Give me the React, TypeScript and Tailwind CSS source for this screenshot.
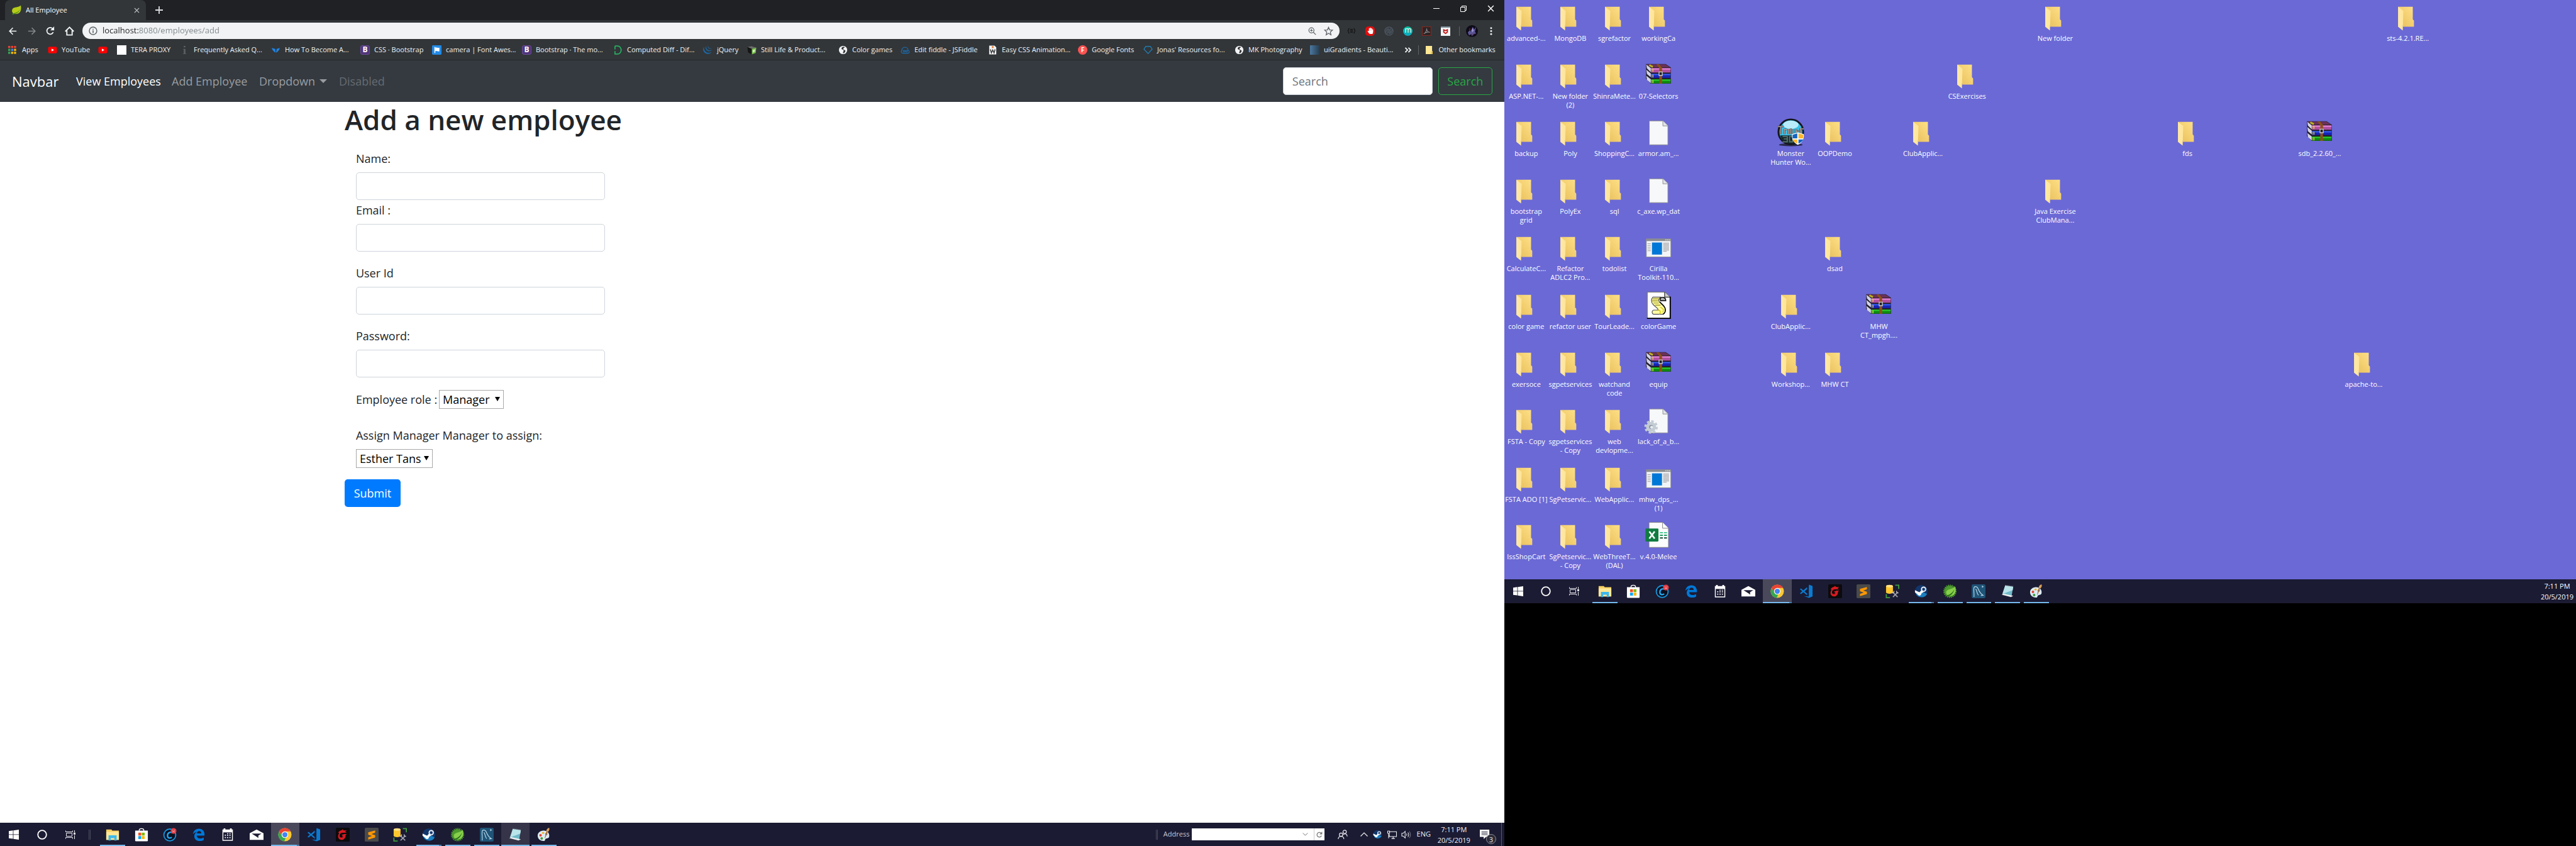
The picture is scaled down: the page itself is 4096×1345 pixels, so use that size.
import React from "react";
import { SiJquery } from "react-icons/si";
import { FaHandPaper } from "react-icons/fa";

type IconProps = { className?: string };

/* ---------- small browser icons ---------- */

const Leaf = ({ className }: IconProps) => (
  <svg viewBox="0 0 16 16" className={className}>
    <path d="M15 .5c.8 4 .8 8.800-2 11.500-2.400 2.300-6 2.600-9.500 1.600C.8 11.500.3 8.500 2 6c2.300-3.400 9.500-1.500 13-5.500z" fill="#b5cc18" />
    <path d="M1 14.800c1.500.8 3.500.3 5-1 3.500-.5 7-3 8.500-8-2 4.500-6 6.500-12 7.500z" fill="#4c8c1a" />
  </svg>
);

const CloseX = ({ className }: IconProps) => (
  <svg viewBox="0 0 10 10" className={className} stroke="currentColor" strokeWidth="1.300">
    <path d="M1 1l8 8M9 1L1 9" />
  </svg>
);

const Arrow = ({ className }: IconProps) => (
  <svg viewBox="0 0 16 16" className={className} fill="none" stroke="currentColor" strokeWidth="2">
    <path d="M15 8H2M8 1.500L1.500 8 8 14.500" />
  </svg>
);

const Reload = ({ className }: IconProps) => (
  <svg viewBox="0 0 16 16" className={className}>
    <path d="M13.300 10.500A6 6 0 1 1 12 3.800" fill="none" stroke="currentColor" strokeWidth="2" />
    <path d="M15 0v7H8z" fill="currentColor" />
  </svg>
);

const Home = ({ className }: IconProps) => (
  <svg viewBox="0 0 16 16" className={className} fill="none" stroke="currentColor" strokeWidth="2">
    <path d="M.8 8.500L8 1.500l7.200 7M3.500 7v7.500h9V7" />
  </svg>
);

const Info = ({ className }: IconProps) => (
  <svg viewBox="0 0 16 16" className={className}>
    <circle cx="8" cy="8" r="6.800" fill="none" stroke="#5f6368" strokeWidth="1.700" />
    <path d="M7.100 7h1.800v5H7.100zM7.100 4.200h1.800v1.700H7.100z" fill="#5f6368" />
  </svg>
);

const ZoomIn = ({ className }: IconProps) => (
  <svg viewBox="0 0 16 16" className={className} fill="none" stroke="#5f6368" strokeWidth="1.500">
    <circle cx="6.500" cy="6.500" r="5" />
    <path d="M10.200 10.200L15 15M4 6.500h5M6.500 4v5" />
  </svg>
);

const Star = ({ className }: IconProps) => (
  <svg viewBox="0 0 16 16" className={className} fill="none" stroke="#5f6368" strokeWidth="1.400">
    <path d="M8 1.500l1.900 4.400 4.700.4-3.600 3.200 1.100 4.700L8 11.700l-4.100 2.500L5 9.500 1.400 6.300l4.700-.4z" />
  </svg>
);

const Swirl = ({ className }: IconProps) => (
  <svg viewBox="0 0 16 16" className={className} fill="none" stroke="#4a525c" strokeWidth="1.600">
    <circle cx="8" cy="8" r="7" />
    <path d="M3 11c-1-4 2-7 5-7.500M13 5c1 4-2 7-5 7.500M5 9c0-3 3-4 5-3M11 7c0 3-3 4-5 3M4 13l8-10" />
  </svg>
);

const Pdf = ({ className }: IconProps) => (
  <svg viewBox="0 0 16 16" className={className}>
    <rect x=".6" y=".6" width="14.800" height="14.800" fill="#2c2426" stroke="#7e2a22" strokeWidth="1.200" />
    <path d="M3 12.500c3-1.500 5-5 5-9 .2 4 2 6.500 5.500 6.500C10 9 6 10 3 12.500z" fill="none" stroke="#8d8d90" strokeWidth="1.100" />
  </svg>
);

const Shield = ({ className }: IconProps) => (
  <svg viewBox="0 0 16 16" className={className}>
    <rect width="16" height="16" fill="#f4f4f4" />
    <rect width="16" height="2.200" fill="#7d9099" />
    <path d="M4 4.200l4 2 4-2v6l-4 2.800-4-2.800z" fill="#c01818" />
    <path d="M6 7.300l2 1 2-1v2l-2 1.400-2-1.400z" fill="#f4f4f4" />
  </svg>
);

const Avatar = ({ className }: IconProps) => (
  <svg viewBox="0 0 20 20" className={className}>
    <circle cx="10" cy="10" r="10" fill="#0e0b18" />
    <path d="M3 12l4-4 1 3 3-8 2 5 4-5-2 8 2 3-5 1-2 4-1-4-4 2z" fill="#5b5596" />
    <path d="M9 9l3-5 1 5-2 3z" fill="#9a93cf" />
    <path d="M5 8l1-3 2 2zM11 14l3 1-2 2z" fill="#7c2330" />
  </svg>
);

const Dots = ({ className }: IconProps) => (
  <svg viewBox="0 0 4 14" className={className} fill="#f1f1f1">
    <circle cx="2" cy="2" r="1.600" />
    <circle cx="2" cy="7" r="1.600" />
    <circle cx="2" cy="12" r="1.600" />
  </svg>
);

/* ---------- bookmark icons ---------- */

const AppsGrid = () => (
  <svg viewBox="0 0 14 14" className="size-[13px]">
    {["#ea4335", "#ea4335", "#ea4335", "#34a853", "#4285f4", "#fbbc05", "#34a853", "#fbbc05", "#fbbc05"].map((c, i) => (
      <rect key={i} x={(i % 3) * 5} y={Math.floor(i / 3) * 5} width="3.600" height="3.600" fill={c} />
    ))}
  </svg>
);
const YouTube = () => (
  <svg viewBox="0 0 16 16" className="size-[15px]">
    <rect x=".5" y="2.500" width="15" height="11" rx="2.800" fill="#f00" />
    <path d="M6.300 5.500v5l4.400-2.500z" fill="#fff" />
  </svg>
);
const BlankPage = () => <span className="size-[15px] bg-white" />;
const GreyInfo = () => (
  <svg viewBox="0 0 16 16" className="size-[15px]">
    <path d="M6.500 1h3v2.500h-3zM5.500 6h4v8h1.500v1h-6v-1h1.500V7h-1z" fill="#5b5e62" />
  </svg>
);
const Vee = () => (
  <svg viewBox="0 0 16 16" className="size-[15px]">
    <path d="M1 4.500l6 1.500.8 6.500C5 11 2 8 1 4.500zM15 4.500L9.500 6 8.500 12.500C11.500 11 14 8 15 4.500z" fill="#1f86e8" />
  </svg>
);
const Bs = () => (
  <span className="flex size-[15px] items-center justify-center rounded-[3px] border border-[#6a4a94] bg-[#50357b] text-[12px] leading-none font-bold text-white">B</span>
);
const Flag = () => (
  <svg viewBox="0 0 16 16" className="size-[15px]">
    <rect width="16" height="16" rx="1.500" fill="#228ae6" />
    <path d="M4 3h1.500v1c2-1 4 1 7 0v6c-3 1-5-1-7 0v3H4z" fill="#fff" />
  </svg>
);
const Diff = () => (
  <svg viewBox="0 0 16 16" className="size-[15px]">
    <path d="M3 1.200h4.500a6 6.800 0 0 1 0 13.600H3v-5M3 1.200V7" fill="none" stroke="#27ae60" strokeWidth="1.900" />
  </svg>
);
const Jq = () => <SiJquery className="size-[14px] text-[#1b6aa9]" />;
const Cube = () => (
  <svg viewBox="0 0 16 16" className="size-[15px]">
    <path d="M.5 3l7-1.500 8 2.500L8 6z" fill="#6b6b6b" />
    <path d="M.5 3L8 6v9.500L1.500 12z" fill="#151515" />
    <path d="M8 6l7.500-2-1 9L8 15.500z" fill="#77c04b" />
    <path d="M9.500 8l4-1-.5 4-3.500 1.500z" fill="#d5ecc4" />
  </svg>
);
const Globe = () => (
  <svg viewBox="0 0 16 16" className="size-[15px]">
    <circle cx="8" cy="8" r="7" fill="#f1f3f4" />
    <path d="M9 2.500C6 3 5 4.500 5.500 6.500c1 1 3.500.5 3.500 2.500s-1.500 2-1 4.500c3-.5 4-2.500 4-4.500-1-1.500-3.500-1-3.500-3s2-1.500 2.500-2.500z" fill="#35363a" />
  </svg>
);
const Fiddle = () => (
  <svg viewBox="0 0 16 16" className="size-[15px]" fill="none" stroke="#1a6fb5" strokeWidth="1.200">
    <path d="M3.500 13.500C1 13 .3 10 2.200 8.500 2 5 6 2 9.300 3.800c2.500.7 3.500 2.700 3.500 4.700 2.500 1 2.500 4.500-.3 5z" />
    <path d="M8 10C6.500 8 4.500 8 4.500 9.800s2 2 3.500.2 3.500-2 3.500-.2-2 2-3.500.2z" />
  </svg>
);
const WDoc = () => (
  <svg viewBox="0 0 16 16" className="size-[15px]">
    <path d="M2 .5h9l3 3v12H2z" fill="#f2f2f2" />
    <circle cx="8" cy="3" r="1.700" fill="#e8792b" />
    <path d="M4 7l1.700 6L8 8l2.300 5L12 7" fill="none" stroke="#3a3a3a" strokeWidth="1.600" />
  </svg>
);
const FBadge = () => (
  <span className="flex size-[15px] items-center justify-center rounded-full bg-[#ff5252] text-[10px] leading-none font-bold text-white">F</span>
);
const Gem = () => (
  <svg viewBox="0 0 16 16" className="size-[15px]" fill="none" stroke="#1f86c4" strokeWidth="1.200">
    <path d="M4 2h8l3 4.500L8 14 1 6.500z" />
  </svg>
);
const Gradient = () => <span className="size-[15px] bg-linear-to-r from-[#4b79a1] to-[#283e51]" />;

type Bookmark = { label: string; width: string; icon: React.ReactNode };
const bookmarks: Bookmark[] = [
  { label: "Apps", width: "w-[63px]", icon: <AppsGrid /> },
  { label: "YouTube", width: "w-[80px]", icon: <YouTube /> },
  { label: "", width: "w-[30px]", icon: <YouTube /> },
  { label: "TERA PROXY", width: "w-[100px]", icon: <BlankPage /> },
  { label: "Frequently Asked Q...", width: "w-[145px]", icon: <GreyInfo /> },
  { label: "How To Become A...", width: "w-[142px]", icon: <Vee /> },
  { label: "CSS · Bootstrap", width: "w-[114px]", icon: <Bs /> },
  { label: "camera | Font Awes...", width: "w-[143px]", icon: <Flag /> },
  { label: "Bootstrap · The mo...", width: "w-[145px]", icon: <Bs /> },
  { label: "Computed Diff - Dif...", width: "w-[143px]", icon: <Diff /> },
  { label: "jQuery", width: "w-[70px]", icon: <Jq /> },
  { label: "Still Life & Product...", width: "w-[145px]", icon: <Cube /> },
  { label: "Color games", width: "w-[99px]", icon: <Globe /> },
  { label: "Edit fiddle - JSFiddle", width: "w-[139px]", icon: <Fiddle /> },
  { label: "Easy CSS Animation...", width: "w-[143px]", icon: <WDoc /> },
  { label: "Google Fonts", width: "w-[104px]", icon: <FBadge /> },
  { label: "Jonas' Resources fo...", width: "w-[145px]", icon: <Gem /> },
  { label: "MK Photography", width: "w-[120px]", icon: <Globe /> },
  { label: "uiGradients - Beauti...", width: "w-[145px]", icon: <Gradient /> },
];

/* ---------- browser window ---------- */

function TabStrip() {
  return (
    <div className="flex h-8 bg-[#202124] pl-2 text-white">
      <div className="relative flex w-[224px] items-center rounded-t-lg bg-[#323639] pr-[10px] pl-[10px]">
        <Leaf className="size-4" />
        <span className="ml-[7px] flex-1 text-[11px]">All Employee</span>
        <button aria-label="Close tab" className="text-[#c8cacc]">
          <CloseX className="size-[9px]" />
        </button>
      </div>
      <button aria-label="New tab" className="ml-[9px] flex w-[23px] items-center justify-center text-[#dadce0]">
        <svg viewBox="0 0 12 12" className="size-[12px]" stroke="currentColor" strokeWidth="1.800">
          <path d="M6 0v12M0 6h12" />
        </svg>
      </button>
      <div className="ml-auto flex pb-[5px]">
        <button aria-label="Minimize" className="flex w-[43px] items-center justify-center">
          <span className="h-px w-[10px] bg-white" />
        </button>
        <button aria-label="Restore" className="flex w-[43px] items-center justify-center">
          <svg viewBox="0 0 10 10" className="size-[10px]" fill="none" stroke="#fff">
            <path d="M.5 2.500h7v7h-7zM2.500 2.500v-2h7v7h-2" />
          </svg>
        </button>
        <button aria-label="Close" className="flex w-[43px] items-center justify-center">
          <CloseX className="size-[11px]" />
        </button>
      </div>
    </div>
  );
}

function Toolbar() {
  return (
    <div className="flex h-[34px] items-center bg-[#323639] pr-[6px] pl-[5px] text-[#f1f3f4]">
      <button aria-label="Back" className="flex w-[30px] justify-center"><Arrow className="size-[13px]" /></button>
      <button aria-label="Forward" className="flex w-[30px] justify-center text-[#85888b]"><Arrow className="size-[13px] rotate-180" /></button>
      <button aria-label="Reload" className="flex w-[30px] justify-center"><Reload className="size-[14px]" /></button>
      <button aria-label="Home" className="flex w-[30px] justify-center"><Home className="size-[15px]" /></button>
      <div className="ml-[6px] flex h-[26px] flex-1 items-center rounded-full bg-[#f1f3f4] pr-[10px] pl-[10px]">
        <Info className="size-[14px]" />
        <input
          aria-label="Address and search bar"
          defaultValue="localhost:8080/employees/add"
          className="ml-2 flex-1 bg-linear-[to_right,#202124_57px,#80868b_57px] bg-clip-text text-[13px] text-transparent outline-none"
        />
        <button aria-label="Zoom" className="flex w-[30px] justify-center"><ZoomIn className="size-[13px]" /></button>
        <button aria-label="Bookmark this page" className="flex w-[18px] justify-end"><Star className="size-[15px]" /></button>
      </div>
      <div className="ml-1 flex items-center">
        <button aria-label="JSON viewer" className="flex w-[30px] justify-center">
          <svg viewBox="0 0 16 16" className="size-[14px]" fill="none" stroke="#111" strokeWidth="1.400">
            <path d="M4 3.500C1.500 3.500 3.500 8 1 8c2.500 0 .5 4.500 3 4.500M12 3.500c2.500 0 .5 4.500 3 4.500-2.500 0-.5 4.500-3 4.500M5.500 5.500h5M5.500 8h5M5.500 10.500h5" />
          </svg>
        </button>
        <button aria-label="Ad blocker" className="flex w-[30px] justify-center">
          <span className="flex size-[15px] items-center justify-center rounded-[5px] bg-[#e40d0d]">
            <FaHandPaper className="size-[10px] text-white" />
          </span>
        </button>
        <button aria-label="Swirl extension" className="flex w-[30px] justify-center"><Swirl className="size-[15px]" /></button>
        <button className="flex w-[30px] justify-center">
          <span className="flex size-[15px] items-center justify-center rounded-full bg-linear-to-b from-[#0cc09a] to-[#0fa9c4] pb-[2px] text-[12px] leading-none text-white">m</span>
        </button>
        <button aria-label="PDF tools" className="flex w-[30px] justify-center"><Pdf className="size-[15px]" /></button>
        <button aria-label="Web protection" className="flex w-[30px] justify-center"><Shield className="size-[15px]" /></button>
      </div>
      <span className="mr-[5px] ml-[6px] h-[15px] w-px bg-[#5f6368]" />
      <button aria-label="Profile" className="flex w-[30px] justify-center"><Avatar className="size-[19px]" /></button>
      <button aria-label="Menu" className="flex w-[30px] justify-center"><Dots className="h-[13px] w-1" /></button>
    </div>
  );
}

function BookmarksBar() {
  return (
    <div className="flex h-[30px] items-center border-b border-[#26282a] bg-[#323639] pr-[14px] pb-[3px] pl-[13px] text-[11px] text-[#f1f3f4]">
      {bookmarks.map((b, i) => (
        <a key={i} href="#" aria-label={b.label || "YouTube"} className={`flex shrink-0 items-center gap-[7px] whitespace-nowrap ${b.width}`}>
          <span className="flex w-[15px] shrink-0 items-center">{b.icon}</span>
          {b.label && <span>{b.label}</span>}
        </a>
      ))}
      <button aria-label="More bookmarks" className="ml-auto">
        <svg viewBox="0 0 12 10" className="h-[9px] w-[12px]" fill="none" stroke="#f1f3f4" strokeWidth="2">
          <path d="M1 1l4 4-4 4M6.500 1l4 4-4 4" />
        </svg>
      </button>
      <span className="mr-[11px] ml-[10px] h-[15px] w-px bg-[#5f6368]" />
      <a href="#" className="flex items-center gap-[10px] whitespace-nowrap">
        <svg viewBox="0 0 12 14" className="h-[13px] w-[11px]">
          <path d="M0 0h11v9h1v5H0z" fill="#ffe793" />
          <path d="M9 14V9.500h3V14z" fill="#e9c54f" />
        </svg>
        Other bookmarks
      </a>
    </div>
  );
}

function Navbar() {
  return (
    <nav className="flex h-[66px] items-center bg-[#343a40] pr-[19px] pl-[19px] text-[18px] leading-7 text-[#9a9da0]">
      <a href="#" className="w-[102px] text-[22px] text-white">Navbar</a>
      <a href="#" className="w-[152px] text-white">View Employees</a>
      <a href="#" className="w-[139px]">Add Employee</a>
      <button className="flex w-[127px] items-center gap-[7px]">
        Dropdown
        <svg viewBox="0 0 12 6" className="h-[6px] w-[12px]" fill="currentColor"><path d="M0 0h12L6 6z" /></svg>
      </button>
      <a href="#" aria-disabled="true" className="text-[#676b70]">Disabled</a>
      <form className="ml-auto flex gap-[9px]" onSubmit={(e) => e.preventDefault()}>
        <input
          type="search"
          aria-label="Search"
          placeholder="Search"
          className="h-11 w-[238px] rounded-[5px] border border-[#ced4da] bg-white px-[14px] text-[#495057] outline-none placeholder:text-[#6c757d]"
        />
        <button className="h-11 w-[86px] rounded-[5px] border border-[#28a745] text-[#28a745]">Search</button>
      </form>
    </nav>
  );
}

function Field({ id, label, type = "text" }: { id: string; label: string; type?: string }) {
  return (
    <div>
      <label htmlFor={id} className="mb-2 block">{label}</label>
      <input id={id} type={type} className="block h-11 w-[396px] rounded-[5px] border border-[#ced4da] bg-white px-[14px] outline-none" />
    </div>
  );
}

function Picker({ id, value, width }: { id: string; value: string; width: string }) {
  return (
    <span className={`relative inline-block ${width}`}>
      <select id={id} defaultValue={value} className="h-[30px] w-full appearance-none border border-[#a9a9a9] bg-white pl-[5px] text-black outline-none">
        <option>{value}</option>
      </select>
      <svg viewBox="0 0 8 7" className="pointer-events-none absolute top-[11px] right-[6px] h-[7px] w-[8px]"><path d="M0 0h8L4 7z" /></svg>
    </span>
  );
}

function EmployeePage() {
  return (
    <main className="mx-auto w-full max-w-[1332px] px-[18px] text-[18px] leading-7 text-[#212529]">
      <h1 className="text-[44px] leading-[56px] font-semibold">Add a new employee</h1>
      <form onSubmit={(e) => e.preventDefault()}>
        <div className="mt-5 px-[18px]">
          <div className="flex flex-col gap-[2px]">
            <Field id="name" label="Name:" />
            <Field id="email" label="Email :" type="email" />
          </div>
          <div className="mt-5 flex flex-col gap-5">
            <Field id="user-id" label="User Id" />
            <Field id="password" label="Password:" type="password" />
            <div className="flex items-center gap-[3px]">
              <label htmlFor="role">Employee role :</label>
              <Picker id="role" value="Manager" width="w-[103px]" />
            </div>
          </div>
          <label htmlFor="manager" className="mt-7 block">Assign Manager Manager to assign:</label>
          <div className="mt-2 flex">
            <Picker id="manager" value="Esther Tans" width="w-[122px]" />
          </div>
        </div>
        <button className="mt-[18px] h-11 w-[89px] rounded-[5px] bg-[#007bff] font-medium text-white">Submit</button>
      </form>
    </main>
  );
}

/* ---------- taskbar ---------- */

const Windows = () => (
  <svg viewBox="0 0 16 16" className="size-4" fill="#fff">
    <path d="M0 2.200l6.600-.9v6.200H0zM7.400 1.200L16 0v7.500H7.400zM0 8.300h6.600v6.300L0 13.700zM7.400 8.300H16V16l-8.600-1.200z" />
  </svg>
);
const Cortana = () => (
  <svg viewBox="0 0 16 16" className="size-4"><circle cx="8" cy="8" r="6.800" fill="none" stroke="#fff" strokeWidth="1.800" /></svg>
);
const TaskView = () => (
  <svg viewBox="0 0 16 16" className="size-4" fill="none" stroke="#e8e8ee">
    <path d="M.5 1.500v2h11v-2M.5 14.500v-2h11v2M1.500 5.500h9v5h-9zM14.500 1v3M14.500 9v6" />
    <path d="M13.500 5h2v2.500h-2z" fill="#e8e8ee" />
  </svg>
);
const Explorer = () => (
  <svg viewBox="0 0 24 24" className="size-[22px]">
    <path d="M1 3h9l1.500 2H23v16H1z" fill="#f7cf60" />
    <path d="M1 7h22v14H1z" fill="#ffe796" />
    <path d="M5 13h14v9h-4v-4H9v4H5z" fill="#3db8ec" />
  </svg>
);
const Store = () => (
  <svg viewBox="0 0 24 24" className="size-[22px]">
    <path d="M8 6V4.500C8 .5 16 .5 16 4.500V6" fill="none" stroke="#fff" strokeWidth="1.500" />
    <path d="M1 5h22v17a1.500 1.500 0 0 1-1.500 1.500h-19A1.500 1.500 0 0 1 1 22z" fill="#fff" />
    <path d="M6.500 8.500h5v5h-5z" fill="#f25022" />
    <path d="M12.500 8.500h5v5h-5z" fill="#7fba00" />
    <path d="M6.500 14.500h5v5h-5z" fill="#00a4ef" />
    <path d="M12.500 14.500h5v5h-5z" fill="#ffb900" />
  </svg>
);
const CClean = () => (
  <svg viewBox="0 0 24 24" className="size-[22px]">
    <circle cx="12" cy="12.500" r="10.300" fill="#0a1020" stroke="#1795dc" strokeWidth="2" />
    <path d="M16 8.500c-3.500-2-8 .5-8 5s4 5.500 7.500 3" fill="none" stroke="#22a7f0" strokeWidth="2.600" />
    <circle cx="18.500" cy="5.500" r="5" fill="#e23b44" />
    <path d="M16.500 4.500h1.200M19.500 4.500h1.200M16.500 7.500c1-1.200 3-1.200 4 0" stroke="#fff" strokeWidth=".8" fill="none" />
  </svg>
);
const Edge = () => (
  <svg viewBox="0 0 24 24" className="size-[22px]">
    <path d="M2 11C3 4.500 7.500 1.500 12.500 1.500c6 0 9.500 4.500 9.500 9.500v2.500H8.500c.2 3.500 3 5 6 5 2.500 0 4.500-.7 6.200-1.700v4.500c-2 1.200-4.500 1.700-7.200 1.700-5.500 0-9.200-3.300-9.200-8.300 0-3.500 1.900-6.200 4.700-7.700C6 7.500 3.500 9 2 11zm6.700-1.300h7.800c0-2.500-1.300-4-3.700-4-2.300 0-3.800 1.800-4.100 4z" fill="#0078d7" />
  </svg>
);
const Calendar = () => (
  <svg viewBox="0 0 24 24" className="size-[22px]">
    <path d="M3 3h2V1h3v2h8V1h3v2h2v19.500H3z" fill="#fff" />
    <path d="M4.500 8h15v13h-15z" fill="#1b1b33" />
    <path d="M7 12h2v2H7zM11 12h2v2h-2zM15 12h2v2h-2zM7 16h2v2H7zM11 16h2v2h-2zM15 16h2v2h-2zM11 9.500h2v1.500h-2zM15 9.500h2v1.500h-2z" fill="#fff" />
  </svg>
);
const Mail = () => (
  <svg viewBox="0 0 24 24" className="size-[22px]">
    <path d="M0 9.500L12 3l12 6.500V21H0z" fill="#fff" />
    <path d="M3.500 10h17L12 15.500z" fill="#1b1b33" />
    <path d="M11 14.500l4-1.500v5z" fill="#1b1b33" />
  </svg>
);
const Chrome = () => (
  <svg viewBox="0 0 24 24" className="size-[22px]">
    <circle cx="12" cy="12" r="11.500" fill="#fcc934" />
    <path d="M2 6.300A11.500 11.500 0 0 1 22 6.300H12a5.700 5.700 0 0 0-5 8.500z" fill="#ea4335" />
    <path d="M2 6.300l5.100 8.600a5.700 5.700 0 0 0 6.400 2.600L11 23.500A11.500 11.500 0 0 1 2 6.300z" fill="#34a853" />
    <circle cx="12" cy="12" r="5.600" fill="#fff" />
    <circle cx="12" cy="12" r="4.500" fill="#4285f4" />
  </svg>
);
const VsCode = () => (
  <svg viewBox="0 0 24 24" className="size-[22px]" fill="#0b7bd1">
    <path d="M17 .5l6 2.500v18l-6 2.500-9-3 8.500.5V3z" />
    <path d="M13.500 5v14L1 8.500 3 7l10.500 9V8.500L3 17l-2-1.500z" />
  </svg>
);
const Garena = () => (
  <svg viewBox="0 0 24 24" className="size-[22px]">
    <rect width="24" height="24" rx="2" fill="#0b0b0d" />
    <path d="M4 8.500c2-3 4-4 6-4.200L12 2.500l1 1.800 6 .7-3 1.800 3 1.700-8 .3c-3 .5-4.500 2.500-4.500 5 0 2.200 2 3.500 4 3l2.500-.8-2-3.500 3-1.500h5l-2 1.500c0 5-2.500 8.500-7 8.500-4 0-6.500-3-6-7 .2-2 1-3.500 2-4.500z" fill="#d71a21" />
    <path d="M10.500 12l2 1.500-.5 3" fill="none" stroke="#d71a21" strokeWidth="1.300" />
  </svg>
);
const Sublime = () => (
  <svg viewBox="0 0 24 24" className="size-[22px]">
    <rect width="24" height="24" rx="2" fill="#4a4a4a" />
    <path d="M18 4.500v4l-6.500 2.300 6.500 2V17L6 20.500v-4l6.500-2.300L6 12V8z" fill="#ff9800" />
  </svg>
);
const SqlTools = () => (
  <svg viewBox="0 0 24 24" className="size-[22px]">
    <path d="M1 3c0-3 12-3 12 0v11c0 3-12 3-12 0z" fill="#ffc62e" />
    <ellipse cx="7" cy="3.200" rx="6" ry="2.200" fill="#ffe28a" />
    <path d="M17 1.500h6V8M1.500 17v6H8" fill="none" stroke="#3f9a3c" strokeWidth="2" />
    <path d="M13 14l8 8M21 14l-8 8" stroke="#9a9da6" strokeWidth="2" />
    <path d="M11.500 14.500c2 1 4-1 3-3M22.500 14.500c-2 1-4-1-3-3" fill="none" stroke="#c4c6cc" strokeWidth="1.500" />
  </svg>
);
const Steam = ({ className = "size-[22px]" }: IconProps) => (
  <svg viewBox="0 0 24 24" className={className}>
    <circle cx="12" cy="12" r="11" fill="#12366b" />
    <path d="M2 15a11 11 0 0 0 20 1.500L12 12z" fill="#1c7fc0" />
    <path d="M1 10l8 4 3-4 4 3-4 3c0 4-5 5-7 1L1 14z" fill="#fff" />
    <circle cx="16" cy="8.500" r="4.600" fill="#fff" />
    <circle cx="16" cy="8.500" r="2.800" fill="#12366b" stroke="#9fb4cf" />
  </svg>
);
const Spring = () => (
  <svg viewBox="0 0 24 24" className="size-[22px]">
    <circle cx="11.500" cy="12" r="10.300" fill="none" stroke="#4d9a2e" strokeWidth="2.500" strokeDasharray="1.800 1.400" />
    <circle cx="11.500" cy="12" r="9.800" fill="#4d9a2e" />
    <path d="M20.500 3.500c2.500 8 .5 14.500-6 16-5 1.200-9.500-.5-9.500-5.500C5 7 16 9.500 20.500 3.500z" fill="#86cf4a" />
    <path d="M4.500 19.500c6-1 11.500-4 14.500-11-1.500 7.500-6.500 12-13.500 12.500z" fill="#256b18" />
  </svg>
);
const MySql = () => (
  <svg viewBox="0 0 24 24" className="size-[22px]">
    <rect width="24" height="24" rx="2.500" fill="#1f5477" />
    <path d="M4 22C5 17 3 12 4 7c0-4 5-4 7 0 2 5 4 9 9 12l-4 .5M7 8c3 3 1 7 5 11" fill="none" stroke="#b9d7ea" strokeWidth="1.300" />
    <path d="M18 2l3 2-3 2z" fill="#b9d7ea" />
  </svg>
);
const Notepad = () => (
  <svg viewBox="0 0 24 24" className="size-[22px]">
    <path d="M8 2l14 2-3 17-14-3z" fill="#6fb9c8" />
    <path d="M8 2l14 2-1 6L3 17z" fill="#b9e4ea" />
    <path d="M2 18l16 4 4-2-17-4z" fill="#e9eef0" />
    <path d="M8 1.500l14 2" stroke="#667" strokeWidth="1.500" strokeDasharray="1.500 1" />
  </svg>
);
const Paint = () => (
  <svg viewBox="0 0 24 24" className="size-[22px]">
    <path d="M10 5c7-1 12 4 11 10-.6 4-4 3-6 4s0 4-4 4C5 23 1 18.500 1 14S4 6 10 5z" fill="#dcebf5" />
    <circle cx="6" cy="13" r="2.200" fill="#e0452f" />
    <circle cx="8" cy="18.500" r="2.200" fill="#3c9a3a" />
    <circle cx="10.500" cy="9" r="2" fill="#f3b62c" />
    <circle cx="16" cy="11" r="2" fill="#3a7bd5" />
    <path d="M19 6l-5 12-1 .2L16.500 5z" fill="#b56a28" />
    <path d="M16 6c0-3 2-5 5-6 1 3 0 5-2 7z" fill="#d9a25a" />
  </svg>
);

type App = { name: string; icon: React.ReactNode; running?: boolean; stacked?: boolean; focus?: "left" | "both" };
const apps: App[] = [
  { name: "File Explorer", icon: <Explorer />, running: true },
  { name: "Store", icon: <Store /> },
  { name: "Cleaner", icon: <CClean /> },
  { name: "Edge", icon: <Edge /> },
  { name: "Calendar", icon: <Calendar /> },
  { name: "Mail", icon: <Mail /> },
  { name: "Chrome", icon: <Chrome />, running: true, stacked: true, focus: "both" },
  { name: "Visual Studio Code", icon: <VsCode /> },
  { name: "Garena", icon: <Garena /> },
  { name: "Sublime Text", icon: <Sublime /> },
  { name: "SQL tools", icon: <SqlTools /> },
  { name: "Steam", icon: <Steam />, running: true, stacked: true },
  { name: "Spring Tool Suite", icon: <Spring />, running: true },
  { name: "MySQL Workbench", icon: <MySql />, running: true },
  { name: "Notepad", icon: <Notepad />, running: true, focus: "left" },
  { name: "Paint", icon: <Paint />, running: true },
];

function Launchers({ primary }: { primary: boolean }) {
  return (
    <>
      <div className={`flex items-stretch ${primary ? "w-[156px]" : "w-[137px]"}`}>
        <button aria-label="Start" className="flex w-11 items-center justify-center"><Windows /></button>
        <button aria-label="Cortana" className="flex w-[45px] items-center justify-center"><Cortana /></button>
        <button aria-label="Task view" className="flex w-[45px] items-center justify-center"><TaskView /></button>
        {primary && <span className="ml-[7px] h-4 w-[3px] self-center border-x border-[#4b4b60]" />}
      </div>
      <div className="grid w-[732px] grid-cols-16">
        {apps.map((a) => {
          const lit = a.focus === "both" || (a.focus === "left" && primary);
          return (
            <button key={a.name} aria-label={a.name} className={`relative flex items-center justify-center ${lit ? (a.focus === "both" ? "bg-[#4a495c]" : "bg-[#353449]") : ""}`}>
              {a.icon}
              {a.running && (
                <span className={`absolute bottom-0 flex h-[2px] ${lit ? "inset-x-0" : "inset-x-[3px]"}`}>
                  <span className="flex-1 bg-[#76b9ed]" />
                  {a.stacked && <span className="w-1 bg-[#4f7ba6]" />}
                </span>
              )}
            </button>
          );
        })}
      </div>
    </>
  );
}

function Clock({ className }: IconProps) {
  return (
    <div className={`text-center text-[11px] leading-[17px] ${className}`}>
      <div>7:11 PM</div>
      <div>20/5/2019</div>
    </div>
  );
}

function PrimaryTaskbar() {
  return (
    <footer className="flex h-[37px] bg-[#1b1b33] text-[11px] text-[#f0f0f5]">
      <Launchers primary />
      <div className="ml-auto flex items-center">
        <span className="h-4 w-[3px] border-x border-[#4b4b60]" />
        <label htmlFor="address" className="ml-[9px] w-[45px] whitespace-nowrap text-[#c9c9d3]">Address</label>
        <span className="flex h-[19px] items-center bg-white">
          <input id="address" className="h-full w-[176px] bg-transparent px-1 text-black outline-none" />
          <svg viewBox="0 0 10 6" className="h-[5px] w-[9px]" fill="none" stroke="#555"><path d="M.5.5L5 5 9.500.5" /></svg>
          <button aria-label="Refresh" className="ml-[9px] flex h-full w-[17px] items-center justify-center border-l border-[#ccc] text-[#777]">
            <Reload className="size-[10px]" />
          </button>
        </span>
        <button aria-label="People" className="ml-[20px] flex w-[18px] justify-center">
          <svg viewBox="0 0 18 18" className="size-[16px]" fill="none" stroke="#f0f0f5" strokeWidth="1.300">
            <circle cx="12.500" cy="4" r="3" />
            <circle cx="6" cy="9" r="3" />
            <path d="M1 17c0-6.500 10-6.500 10 0M10 9c3-3 7-1 7 3" />
          </svg>
        </button>
        <button aria-label="Hidden icons" className="ml-[18px] flex w-[14px] justify-center">
          <svg viewBox="0 0 12 7" className="h-[7px] w-[12px]" fill="none" stroke="#f0f0f5" strokeWidth="1.200"><path d="M.5 6.500L6 1l5.500 5.500" /></svg>
        </button>
        <span className="ml-[7px] flex w-4 justify-center"><Steam className="size-[15px]" /></span>
        <svg viewBox="0 0 18 16" className="ml-[6px] h-[14px] w-[17px]" fill="none" stroke="#f0f0f5" strokeWidth="1.200">
          <path d="M5 2.500h12v9H4V7M8 15h6M11 11.500V15M1 1.500h3.500v4H1zM2.700 5.500v9" />
        </svg>
        <svg viewBox="0 0 18 16" className="ml-[6px] h-[14px] w-[16px]" fill="none" stroke="#f0f0f5" strokeWidth="1.200">
          <path d="M1 5.500h2.500L7 2v12l-3.500-3.500H1zM9.500 6c1 1.200 1 2.800 0 4M12 4c2 2.200 2 5.800 0 8" />
          <path d="M14.500 2c3 3.400 3 8.600 0 12" stroke="#77778a" />
        </svg>
        <span className="ml-[8px] w-[24px] text-center">ENG</span>
        <Clock className="ml-[8px] w-[56px]" />
        <button aria-label="Notifications" className="relative ml-[13px] flex h-[37px] w-[26px] items-center">
          <svg viewBox="0 0 18 18" className="size-[16px]">
            <path d="M0 0h17v13h-6l-4 4v-4H0z" fill="#fff" />
            <path d="M3 4h11M3 6.500h11M3 9h11" stroke="#1b1b33" />
          </svg>
          <span className="absolute right-0 bottom-[3px] flex size-[16px] items-center justify-center rounded-full border border-[#8a8a95] bg-[#2c2c38] text-[11px] leading-none">3</span>
        </button>
        <span className="ml-[8px] h-[37px] w-px bg-[#5a5a6b]" />
        <span className="w-1" />
      </div>
    </footer>
  );
}

/* ---------- desktop icons ---------- */

const Folder = () => (
  <svg viewBox="0 0 48 48" className="size-[45px]">
    <defs>
      <linearGradient id="folder-back" x1="0" x2="1" y1="1" y2="0"><stop offset=".2" stopColor="#ecc564" /><stop offset="1" stopColor="#ffe187" /></linearGradient>
      <linearGradient id="folder-front" x1="0" x2="1"><stop offset="0" stopColor="#ffe9a6" /><stop offset="1" stopColor="#ffe49a" /></linearGradient>
    </defs>
    <path d="M7.500 6h25v21.500l2 2V40H16z" fill="url(#folder-back)" />
    <path d="M7.500 6l9 7-1 33.500-8-6.500z" fill="url(#folder-front)" />
  </svg>
);
const Rar = () => (
  <svg viewBox="0 0 48 48" className="size-[45px]">
    <path d="M2.500 5h33l9 6v27.500h-34L2.500 30z" fill="#23202a" />
    <path d="M3 5.500h32l8.500 5.500H11z" fill="#6b3157" />
    <path d="M3 6l7.500 6v7L4 12.500zM3 15l7.500 6v6.500L4 22zM3 25l7.500 6v6.500L4 32z" fill="#d4d3e6" />
    <path d="M11 12h33v7.500H11z" fill="#b04fa0" />
    <path d="M11 12.500h33v2H11z" fill="#e887dc" />
    <path d="M11 21.500h33v7H11z" fill="#1424b8" />
    <path d="M11 22h33v2H11z" fill="#3a62f0" />
    <path d="M11 31h33v7H11z" fill="#0f8a10" />
    <path d="M11 31.500h33v2H11z" fill="#2ed02c" />
    <path d="M12.500 13v5M14.500 13v5M12.500 23v5M14.500 23v5M12.500 32.500v5M14.500 32.500v5" stroke="#e8d948" />
    <path d="M8 7l6 3" stroke="#b9b520" strokeWidth="3" />
    <path d="M20 5.500h4.500l5 6V38.500H25V12z" fill="#8d5117" />
    <path d="M24.500 18.500h5.500v6h-5.500z" fill="#222" stroke="#c9c9c9" strokeWidth="1.400" />
  </svg>
);
const Page = ({ children }: { children?: React.ReactNode }) => (
  <svg viewBox="0 0 48 48" className="size-[45px] overflow-visible">
    <path d="M8 4.500h23.500l8 8V45H8z" fill="#f7f8fa" stroke="#8a8a8c" />
    <path d="M31 4.500V13h8.500" fill="#e3e4e8" stroke="#8a8a8c" />
    {children}
  </svg>
);
const Doc = () => <Page />;
const GearDoc = () => (
  <Page>
    <circle cx="11" cy="35" r="9.500" fill="none" stroke="#c3ccd4" strokeWidth="4" strokeDasharray="4 3.460" />
    <circle cx="11" cy="35" r="6" fill="#f0f2f4" stroke="#c3ccd4" strokeWidth="5" />
    <circle cx="11" cy="35" r="3.500" fill="#8b94a0" />
    <circle cx="12" cy="35.500" r="2.500" fill="#e8eaee" />
  </Page>
);
const AppWindow = () => (
  <svg viewBox="0 0 48 48" className="size-[45px]">
    <path d="M3 9.500h41.500V40H3z" fill="#f3f4f6" stroke="#8b8d91" />
    <path d="M2.500 9h42v4h-42z" fill="#8b8d91" />
    <path d="M12.500 15.500h17V36h-17z" fill="#0078d7" />
    <path d="M5 17.500h5.500M5 20.500h5.500M5 23.500h5.500M5 26.500h5.500M5 29.500h5.500M31.500 16.500h10M31.500 18.500h10M31.500 20.500h10M31.500 22.500h10M31.500 24.500h10M31.500 26.500h10M31.500 28.500h10M31.500 30.500h6" stroke="#9a9ca0" />
    <path d="M35 11h2M38 11h2M41 11h2" stroke="#fff" />
  </svg>
);
const Script = () => (
  <svg viewBox="0 0 48 48" className="size-[45px]">
    <path d="M4.500 1.500h30l9 9V46h-39z" fill="#fff" stroke="#777" strokeWidth="1.500" />
    <path d="M43.500 9v37H4" fill="none" stroke="#000" strokeWidth="2" />
    <path d="M34 1.500V10h9" fill="#ccc" stroke="#000" />
    <path d="M14 10h14c-4 2-5 5-3 8 3 4 9 7 10 12 1 4-1 8-4 9H15c-3-1-3-6 0-7h8c0-4-6-6-9-10-3-3-3-9 0-12z" fill="#fdf9a0" stroke="#555" strokeWidth="1.300" />
    <path d="M14 13h10M13 16.500h10M15 20h9M18 23.500h9" stroke="#8f8a10" strokeWidth="1.300" />
    <path d="M27 12c2-3 9-2 9 4h-7c-3 1-3-2-2-4z" fill="#b5b5b5" stroke="#000" strokeWidth="1.500" />
    <path d="M23 32c4 0 5 4 2 7M27 27l5 4-1 5" fill="none" stroke="#d8cc00" strokeWidth="1.500" />
    <path d="M26 18c3 4 9 7 9 12 1 4-1 8-4 9" fill="none" stroke="#000" strokeWidth="1.500" />
  </svg>
);
const Excel = () => (
  <svg viewBox="0 0 48 48" className="size-[45px]">
    <path d="M7.500 1.500h23l10 10V44h-33z" fill="#fcfcfc" stroke="#7d7d7d" />
    <path d="M30.500 1.500v10h10" fill="#fff" stroke="#7d7d7d" />
    <path d="M26 19h5M33 19h5" stroke="#2fc481" strokeWidth="2" />
    <path d="M26 23.500h5M33 23.500h5" stroke="#1f9c60" strokeWidth="2" />
    <path d="M26 28h5M33 28h5" stroke="#174a34" strokeWidth="2" />
    <rect x="1.500" y="12" width="22" height="22" rx="1.500" fill="#107c41" />
    <path d="M8 17l9 12M17 17L8 29" stroke="#fff" strokeWidth="2.800" />
  </svg>
);
const Trainer = () => (
  <svg viewBox="0 0 48 48" className="size-[45px]">
    <ellipse cx="24" cy="45" rx="20" ry="2.500" fill="#2a2a50" />
    <circle cx="24" cy="23" r="21" fill="#38c0e8" stroke="#14161c" strokeWidth="3" />
    <ellipse cx="24" cy="11" rx="13" ry="7" fill="#b8ecfa" />
    <path d="M6 29h36c-2 8-9 14-18 14S8 37 6 29z" fill="#15262a" />
    <path d="M2 14h10M7 14v13M13 18v9M13 19h4M20 18v9M24 17v10M28 18v9M33 18v9M33 22h5M40 17v10M40 18h6" stroke="#3f3f42" strokeWidth="3" />
    <path d="M2 14h10M7 14v13M13 18v9M13 19h4M20 18v9M24 17v10M28 18v9M33 18v9M33 22h5M40 17v10M40 18h6" stroke="#b4aaa4" strokeWidth="1.500" />
    <path d="M10 31h8v9h-8M12 35h6M22 31h5v9h-5z" fill="none" stroke="#54706a" strokeWidth="2" />
    <path d="M26 27l10-3 10 3c1 9-3 15-10 18-7-3-11-9-10-18z" fill="#fff" />
    <path d="M27 28l8-2.500V34h-8z" fill="#1464c0" />
    <path d="M37 25.500l8 2.500v6h-8z" fill="#ffb62e" />
    <path d="M27 36h8v7c-4-2-7-4-8-7z" fill="#ffb62e" />
    <path d="M37 36h8c-1 3-4 5-8 7z" fill="#1464c0" />
  </svg>
);

const kinds = { folder: Folder, rar: Rar, doc: Doc, gear: GearDoc, app: AppWindow, script: Script, excel: Excel, trainer: Trainer };

type Shortcut = { lines: string[]; at: string; kind?: keyof typeof kinds };
const shortcuts: Shortcut[] = [
  { lines: ["advanced-..."], at: "col-start-1 row-start-1" },
  { lines: ["ASP.NET-..."], at: "col-start-1 row-start-2" },
  { lines: ["backup"], at: "col-start-1 row-start-3" },
  { lines: ["bootstrap", "grid"], at: "col-start-1 row-start-4" },
  { lines: ["CalculateC..."], at: "col-start-1 row-start-5" },
  { lines: ["color game"], at: "col-start-1 row-start-6" },
  { lines: ["exersoce"], at: "col-start-1 row-start-7" },
  { lines: ["FSTA - Copy"], at: "col-start-1 row-start-8" },
  { lines: ["FSTA ADO [1]"], at: "col-start-1 row-start-9" },
  { lines: ["IssShopCart"], at: "col-start-1 row-start-10" },
  { lines: ["MongoDB"], at: "col-start-2 row-start-1" },
  { lines: ["New folder", "(2)"], at: "col-start-2 row-start-2" },
  { lines: ["Poly"], at: "col-start-2 row-start-3" },
  { lines: ["PolyEx"], at: "col-start-2 row-start-4" },
  { lines: ["Refactor", "ADLC2 Pro..."], at: "col-start-2 row-start-5" },
  { lines: ["refactor user"], at: "col-start-2 row-start-6" },
  { lines: ["sgpetservices"], at: "col-start-2 row-start-7" },
  { lines: ["sgpetservices", "- Copy"], at: "col-start-2 row-start-8" },
  { lines: ["SgPetservic..."], at: "col-start-2 row-start-9" },
  { lines: ["SgPetservic...", "- Copy"], at: "col-start-2 row-start-10" },
  { lines: ["sgrefactor"], at: "col-start-3 row-start-1" },
  { lines: ["ShinraMete..."], at: "col-start-3 row-start-2" },
  { lines: ["ShoppingC..."], at: "col-start-3 row-start-3" },
  { lines: ["sql"], at: "col-start-3 row-start-4" },
  { lines: ["todolist"], at: "col-start-3 row-start-5" },
  { lines: ["TourLeade..."], at: "col-start-3 row-start-6" },
  { lines: ["watchand", "code"], at: "col-start-3 row-start-7" },
  { lines: ["web", "devlopme..."], at: "col-start-3 row-start-8" },
  { lines: ["WebApplic..."], at: "col-start-3 row-start-9" },
  { lines: ["WebThreeT...", "(DAL)"], at: "col-start-3 row-start-10" },
  { lines: ["workingCa"], at: "col-start-4 row-start-1" },
  { lines: ["07-Selectors"], at: "col-start-4 row-start-2", kind: "rar" },
  { lines: ["armor.am_..."], at: "col-start-4 row-start-3", kind: "doc" },
  { lines: ["c_axe.wp_dat"], at: "col-start-4 row-start-4", kind: "doc" },
  { lines: ["Cirilla", "Toolkit-110..."], at: "col-start-4 row-start-5", kind: "app" },
  { lines: ["colorGame"], at: "col-start-4 row-start-6", kind: "script" },
  { lines: ["equip"], at: "col-start-4 row-start-7", kind: "rar" },
  { lines: ["lack_of_a_b..."], at: "col-start-4 row-start-8", kind: "gear" },
  { lines: ["mhw_dps_...", "(1)"], at: "col-start-4 row-start-9", kind: "app" },
  { lines: ["v.4.0-Melee"], at: "col-start-4 row-start-10", kind: "excel" },
  { lines: ["Monster", "Hunter Wo..."], at: "col-start-7 row-start-3", kind: "trainer" },
  { lines: ["ClubApplic..."], at: "col-start-7 row-start-6" },
  { lines: ["Workshop..."], at: "col-start-7 row-start-7" },
  { lines: ["OOPDemo"], at: "col-start-8 row-start-3" },
  { lines: ["dsad"], at: "col-start-8 row-start-5" },
  { lines: ["MHW CT"], at: "col-start-8 row-start-7" },
  { lines: ["MHW", "CT_mpgh...."], at: "col-start-9 row-start-6", kind: "rar" },
  { lines: ["ClubApplic..."], at: "col-start-10 row-start-3" },
  { lines: ["CSExercises"], at: "col-start-11 row-start-2" },
  { lines: ["New folder"], at: "col-start-13 row-start-1" },
  { lines: ["Java Exercise", "ClubMana..."], at: "col-start-13 row-start-4" },
  { lines: ["fds"], at: "col-start-16 row-start-3" },
  { lines: ["sdb_2.2.60_..."], at: "col-start-19 row-start-3", kind: "rar" },
  { lines: ["apache-to..."], at: "col-start-20 row-start-7" },
  { lines: ["sts-4.2.1.RE..."], at: "col-start-21 row-start-1" },
];

function Desktop() {
  return (
    <section className="flex flex-col bg-black text-white">
      <div className="bg-[#6b69d6] pr-[22px] pb-[5px]">
        <div className="grid h-[916px] grid-cols-24 grid-rows-10">
          {shortcuts.map((s, i) => {
            const Glyph = kinds[s.kind ?? "folder"];
            return (
              <div key={i} className={`flex flex-col items-center pt-[5px] ${s.at}`}>
                <Glyph />
                <div className="mt-1 text-center text-[11px] leading-[14px] whitespace-nowrap">
                  {s.lines.map((l) => (
                    <div key={l}>{l}</div>
                  ))}
                </div>
              </div>
            );
          })}
        </div>
      </div>
      <footer className="flex h-[38px] bg-[#1b1b33]">
        <Launchers primary={false} />
        <Clock className="mr-[2px] ml-auto w-[56px] self-center" />
      </footer>
    </section>
  );
}

export default function App() {
  return (
    <div className="grid min-h-screen grid-cols-[80fr_57fr] bg-black font-['Open_Sans','Noto_Sans',sans-serif]">
      <section className="flex min-w-0 flex-col bg-white">
        <TabStrip />
        <Toolbar />
        <BookmarksBar />
        <Navbar />
        <div className="flex-1">
          <EmployeePage />
        </div>
        <PrimaryTaskbar />
      </section>
      <Desktop />
    </div>
  );
}
